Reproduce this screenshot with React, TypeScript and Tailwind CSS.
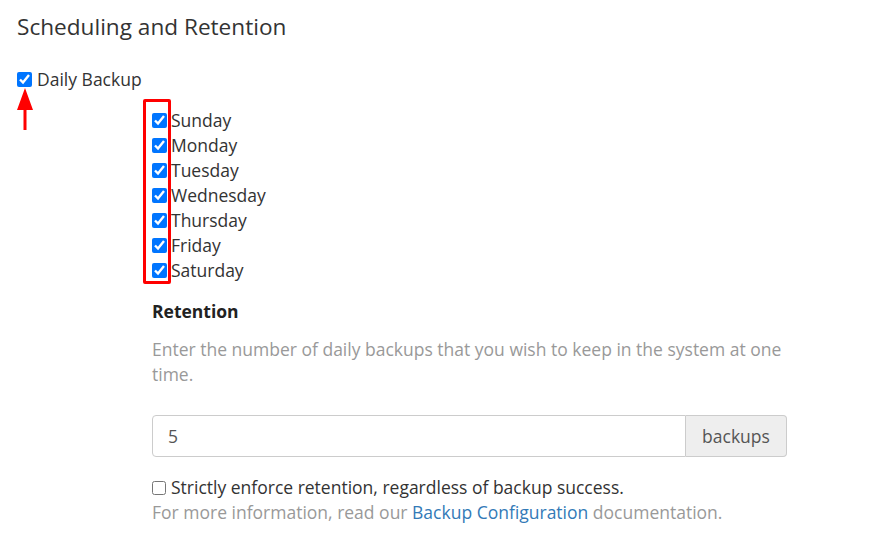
import React, { useState } from "react";

const DAYS = ["Sunday", "Monday", "Tuesday", "Wednesday", "Thursday", "Friday", "Saturday"];

export default function App() {
  const [daily, setDaily] = useState(true);
  const [days, setDays] = useState<boolean[]>(DAYS.map(() => true));
  const [retention, setRetention] = useState("5");
  const [strict, setStrict] = useState(false);

  const toggleDay = (i: number) => {
    setDays((prev) => prev.map((v, j) => (j === i ? !v : v)));
  };

  return (
    <div className="relative w-[888px] h-[549px] bg-white text-[#333] font-['Open_Sans',sans-serif] overflow-hidden">
      {/* Heading */}
      <h2 className="pl-[17px] pt-[11px] text-[22.6px] leading-[32px] font-normal">Scheduling and Retention</h2>

      {/* Daily backup toggle */}
      <label className="flex items-center pl-[17px] mt-[24px] text-[17.5px] leading-[24px]">
        <input
          type="checkbox"
          checked={daily}
          onChange={() => setDaily(!daily)}
          className="w-[15px] h-[15px] m-0 mr-[5px] accent-[#0075ff]"
        />
        Daily Backup
      </label>

      {/* Red annotation arrow */}
      <svg className="absolute left-[17px] top-[88px]" width="16" height="42" viewBox="0 0 16 42">
        <polygon points="8,0 16,22 9.5,22 9.5,42 6.5,42 6.5,22 0,22" fill="#ff0000" />
      </svg>

      <div className="pl-[152px] mt-[17px]">
        {/* Day checkboxes */}
        <div className="relative flex flex-col">
          <div className="absolute left-[-9px] top-[-9px] w-[28px] h-[185px] border-[3px] border-[#ff0000] rounded-[2px]" />
          {DAYS.map((d, i) => (
            <label key={d} className="flex items-center text-[17.5px] leading-[25px]">
              <input
                type="checkbox"
                checked={days[i]}
                onChange={() => toggleDay(i)}
                className="w-[15px] h-[15px] m-0 mr-[4px] accent-[#0075ff]"
              />
              {d}
            </label>
          ))}
        </div>

        {/* Retention */}
        <div className="w-[635px] mt-[16px]">
          <div className="text-[17.5px] leading-[25px] font-bold text-[#222]">Retention</div>
          <p className="mt-[13px] text-[17.5px] leading-[25px] text-[#999]">
            Enter the number of daily backups that you wish to keep in the system at one time.
          </p>

          <div className="flex mt-[28px] h-[42px]">
            <input
              type="text"
              value={retention}
              onChange={(e) => setRetention(e.target.value)}
              className="flex-1 min-w-0 border border-[#ccc] rounded-l-[4px] px-[15px] text-[17.5px] text-[#555] outline-none"
            />
            <span className="flex items-center w-[101px] justify-center bg-[#eee] border border-l-0 border-[#ccc] rounded-r-[4px] text-[17.5px] text-[#555]">
              backups
            </span>
          </div>

          <label className="flex items-center mt-[18px] text-[17.5px] leading-[25px]">
            <input
              type="checkbox"
              checked={strict}
              onChange={() => setStrict(!strict)}
              className="w-[14px] h-[14px] m-0 mr-[5px]"
            />
            Strictly enforce retention, regardless of backup success.
          </label>
          <p className="text-[17.5px] leading-[25px] text-[#999]">
            For more information, read our{" "}
            <a href="#" className="text-[#337ab7]">
              Backup Configuration
            </a>{" "}
            documentation.
          </p>
        </div>
      </div>
    </div>
  );
}
